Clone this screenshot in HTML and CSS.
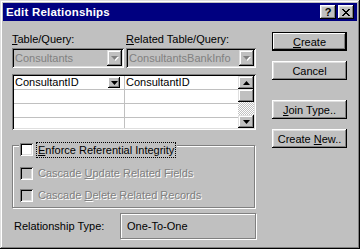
FILE: index.html
```html
<!DOCTYPE html>
<html lang="en">
<head>
  <meta charset="UTF-8" />
  <title>Edit Relationships</title>
  <link rel="stylesheet" href="styles.css">
</head>
<body>
  <div class="window">
    <div class="titlebar">
      <span class="title">Edit Relationships</span>
      <div class="title-btns">
        <span class="tbtn">?</span>
        <span class="tbtn">
          <svg width="8" height="7" viewBox="0 0 8 7" shape-rendering="crispEdges">
            <path d="M0 0h2v1h-2zM6 0h2v1h-2zM1 1h2v1h-2zM5 1h2v1h-2zM2 2h4v1h-4zM3 3h2v1h-2zM2 4h4v1h-4zM1 5h2v1h-2zM5 5h2v1h-2zM0 6h2v1h-2zM6 6h2v1h-2z" fill="#000"/>
          </svg>
        </span>
      </div>
    </div>

    <div class="dialog">
      <div class="main">
        <!-- Tables -->
        <div class="labels">
          <span class="col-left"><u>T</u>able/Query:</span>
          <span class="col-right"><u>R</u>elated Table/Query:</span>
        </div>
        <div class="combos">
          <div class="combo col-left">
            <span class="combo-text">Consultants</span>
            <span class="dd disabled"><svg width="7" height="4" viewBox="0 0 7 4"><polygon points="0,0 7,0 3.5,4"/></svg></span>
          </div>
          <div class="combo col-right">
            <span class="combo-text">ConsultantsBankInfo</span>
            <span class="dd disabled"><svg width="7" height="4" viewBox="0 0 7 4"><polygon points="0,0 7,0 3.5,4"/></svg></span>
          </div>
        </div>

        <!-- Fields grid -->
        <div class="grid">
          <div class="rows">
            <div class="row">
              <div class="cell first">ConsultantID
                <span class="cell-dd"><svg width="7" height="4" viewBox="0 0 7 4"><polygon points="0,0 7,0 3.5,4"/></svg></span>
              </div>
              <div class="cell">ConsultantID</div>
            </div>
            <div class="row"><div class="cell first"></div><div class="cell"></div></div>
            <div class="row"><div class="cell first"></div><div class="cell"></div></div>
            <div class="row"><div class="cell first"></div><div class="cell"></div></div>
          </div>
          <div class="scrollbar">
            <span class="sb-btn"><svg width="7" height="4" viewBox="0 0 7 4"><polygon points="0,4 7,4 3.5,0"/></svg></span>
            <span class="sb-thumb"></span>
            <span class="sb-track"></span>
            <span class="sb-btn"><svg width="7" height="4" viewBox="0 0 7 4"><polygon points="0,0 7,0 3.5,4"/></svg></span>
          </div>
        </div>

        <!-- Integrity -->
        <div class="group">
          <div class="legend">
            <span class="check"></span>
            <span class="focus"><u>E</u>nforce Referential Integrity</span>
          </div>
          <div class="opt">
            <span class="check off"></span>
            <span class="dim">Cascade <u>U</u>pdate Related Fields</span>
          </div>
          <div class="opt">
            <span class="check off"></span>
            <span class="dim">Cascade <u>D</u>elete Related Records</span>
          </div>
        </div>

        <div class="reltype">
          <span>Relationship Type:</span>
          <div class="reltype-box">One-To-One</div>
        </div>
      </div>

      <!-- Buttons -->
      <div class="buttons">
        <button class="btn default"><u>C</u>reate</button>
        <button class="btn">Cancel</button>
        <button class="btn sep"><u>J</u>oin Type..</button>
        <button class="btn">Create <u>N</u>ew..</button>
      </div>
    </div>
  </div>
</body>
</html>
```

FILE: styles.css
```css
body {
  margin: 0;
  font-family: "Liberation Sans", Arial, sans-serif;
  font-size: 11px;
  color: #000;
}

.window {
  width: 360px;
  height: 249px;
  box-sizing: border-box;
  padding: 3px;
  background: #c0c0c0;
  box-shadow: inset -1px -1px #000, inset 1px 1px #dfdfdf, inset -2px -2px #808080, inset 2px 2px #fff;
}

.titlebar {
  height: 18px;
  background: #000080;
  color: #fff;
  display: flex;
  align-items: center;
  justify-content: space-between;
  padding: 0 3px 0 3px;
}

.title {
  font-weight: bold;
  font-size: 11.5px;
  letter-spacing: 0.2px;
}

.title-btns {
  display: flex;
  gap: 2px;
}

.tbtn {
  width: 16px;
  height: 14px;
  box-sizing: border-box;
  background: #c0c0c0;
  color: #000;
  font-weight: bold;
  font-size: 11px;
  line-height: 14px;
  display: flex;
  align-items: center;
  justify-content: center;
  box-shadow: inset -1px -1px #000, inset 1px 1px #fff, inset -2px -2px #808080, inset 2px 2px #dfdfdf;
}

.dialog {
  display: flex;
  gap: 16px;
  padding: 11px 0 0 9px;
}

.main {
  width: 244px;
}

.labels {
  display: flex;
  gap: 2px;
  height: 14px;
  line-height: 14px;
}

.col-left {
  width: 112px;
  flex: none;
}

.col-right {
  flex: 1;
}

.combos {
  display: flex;
  gap: 2px;
  margin-top: 2px;
}

.combo {
  height: 20px;
  box-sizing: border-box;
  padding: 2px 2px 2px 3px;
  display: flex;
  align-items: center;
  color: #808080;
  white-space: nowrap;
  box-shadow: inset 1px 1px #808080, inset -1px -1px #fff, inset 2px 2px #000, inset -2px -2px #dfdfdf;
}

.combo-text {
  flex: 1;
  overflow: hidden;
}

.dd {
  flex: none;
  width: 15px;
  height: 16px;
  display: flex;
  align-items: center;
  justify-content: center;
  background: #c0c0c0;
  box-shadow: inset -1px -1px #000, inset 1px 1px #dfdfdf, inset -2px -2px #808080, inset 2px 2px #fff;
}

.dd.disabled svg {
  fill: #808080;
  filter: drop-shadow(1px 1px 0 #fff);
}

.grid {
  margin-top: 6px;
  height: 56px;
  box-sizing: border-box;
  padding: 2px;
  display: flex;
  background: #fff;
  box-shadow: inset 1px 1px #808080, inset -1px -1px #fff, inset 2px 2px #000, inset -2px -2px #dfdfdf;
}

.rows {
  flex: 1;
  overflow: hidden;
}

.row {
  display: flex;
  height: 13px;
}

.row + .row {
  border-top: 1px solid #c0c0c0;
}

.cell {
  flex: 1;
  line-height: 13px;
  padding-left: 1px;
  display: flex;
  align-items: center;
}

.cell.first {
  flex: none;
  width: 109px;
  border-right: 1px solid #c0c0c0;
}

.cell-dd {
  margin-left: auto;
  margin-right: 4px;
  width: 12px;
  height: 11px;
  display: flex;
  align-items: center;
  justify-content: center;
  background: #c0c0c0;
  box-shadow: inset -1px -1px #000, inset 1px 1px #fff, inset -2px -2px #808080;
}

.scrollbar {
  width: 16px;
  display: flex;
  flex-direction: column;
}

.sb-btn,
.sb-thumb {
  height: 13px;
  background: #c0c0c0;
  display: flex;
  align-items: center;
  justify-content: center;
  box-shadow: inset -1px -1px #000, inset 1px 1px #dfdfdf, inset -2px -2px #808080, inset 2px 2px #fff;
}

.sb-track {
  height: 13px;
  background: repeating-conic-gradient(#c0c0c0 0 25%, #fff 0 50%) 0 0 / 2px 2px;
}

.group {
  margin-top: 15px;
  border: 1px solid #808080;
  box-shadow: inset 1px 1px #fff, 1px 1px #fff;
  width: 243px;
  box-sizing: border-box;
  padding: 0 0 5px 7px;
}

.legend {
  display: inline-flex;
  align-items: center;
  margin: -7px 0 0 -1px;
  padding: 0 2px 0 1px;
  background: #c0c0c0;
  height: 14px;
}

.check {
  width: 13px;
  height: 13px;
  box-sizing: border-box;
  background: #fff;
  box-shadow: inset 1px 1px #808080, inset -1px -1px #fff, inset 2px 2px #000, inset -2px -2px #dfdfdf;
}

.check.off {
  background: #c0c0c0;
}

.focus {
  margin-left: 4px;
  padding: 0 1px;
  line-height: 14px;
  outline: 1px dotted #000;
}

.opt {
  display: flex;
  align-items: center;
  height: 14px;
  margin-top: 8px;
}

.dim {
  margin-left: 5px;
  color: #808080;
  text-shadow: 1px 1px 0 #fff;
}

.reltype {
  display: flex;
  align-items: center;
  margin-top: 5px;
  padding-left: 2px;
}

.reltype-box {
  margin-left: auto;
  width: 136px;
  height: 26px;
  box-sizing: border-box;
  padding-left: 6px;
  display: flex;
  align-items: center;
  border: 1px solid #808080;
  box-shadow: inset 1px 1px #fff, 1px 1px #fff;
}

.buttons {
  display: flex;
  flex-direction: column;
}

.btn {
  width: 75px;
  height: 19px;
  padding: 0;
  border: none;
  background: #c0c0c0;
  font-family: "Liberation Sans", Arial, sans-serif;
  font-size: 11px;
  color: #000;
  box-shadow: inset -1px -1px #000, inset 1px 1px #fff, inset -2px -2px #808080, inset 2px 2px #dfdfdf;
}

.btn + .btn {
  margin-top: 10px;
}

.btn.sep {
  margin-top: 20px;
}

.btn.default {
  box-shadow: inset 0 0 0 1px #000, inset -2px -2px #000, inset 2px 2px #fff, inset -3px -3px #808080;
}
```
